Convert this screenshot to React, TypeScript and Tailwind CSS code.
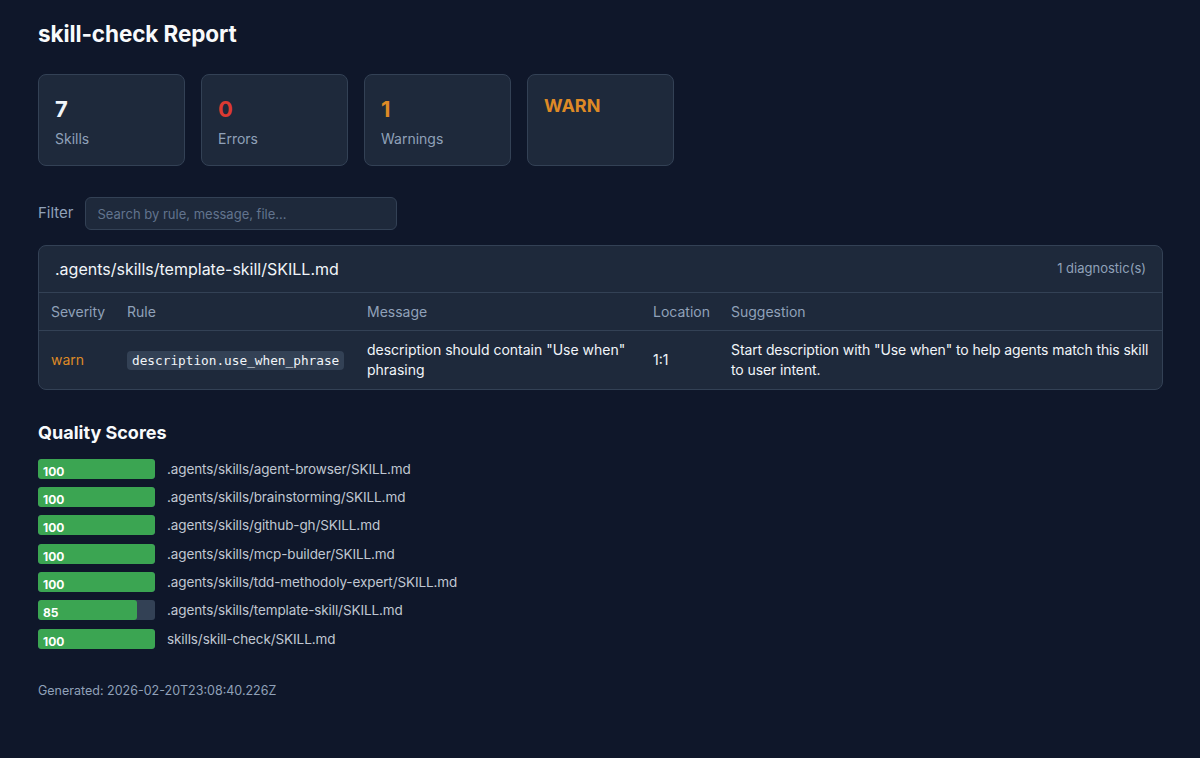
import React from 'react';

type Stat = { value: string; label: string; color: string };

const stats: Stat[] = [
  { value: '7', label: 'Skills', color: 'text-slate-100' },
  { value: '0', label: 'Errors', color: 'text-[#dc3a32]' },
  { value: '1', label: 'Warnings', color: 'text-[#de8a26]' },
];

const scores = [
  { score: 100, file: '.agents/skills/agent-browser/SKILL.md' },
  { score: 100, file: '.agents/skills/brainstorming/SKILL.md' },
  { score: 100, file: '.agents/skills/github-gh/SKILL.md' },
  { score: 100, file: '.agents/skills/mcp-builder/SKILL.md' },
  { score: 100, file: '.agents/skills/tdd-methodoly-expert/SKILL.md' },
  { score: 85, file: '.agents/skills/template-skill/SKILL.md' },
  { score: 100, file: 'skills/skill-check/SKILL.md' },
];

export default function App() {
  return (
    <div
      className="min-h-[758px] bg-[#0f172a] pl-[38px] pr-[37px] pt-[20px] pb-10 text-slate-200"
      style={{ fontFamily: 'Inter, "Noto Sans", sans-serif' }}
    >
      <h1 className="text-[22.5px] font-bold leading-[28px] text-slate-50 tracking-[-0.1px]">skill-check Report</h1>

      <div className="mt-[26px] flex gap-4">
        {stats.map((s) => (
          <div key={s.label} className="h-[92px] w-[147px] rounded-lg border border-[#334155] bg-[#1e293b] px-4 pt-[20px]">
            <div className={`text-[22px] font-bold leading-[28px] ${s.color}`}>{s.value}</div>
            <div className="mt-[7px] text-[14px] leading-[18px] text-slate-400">{s.label}</div>
          </div>
        ))}
        <div className="h-[92px] w-[147px] rounded-lg border border-[#334155] bg-[#1e293b] px-4 pt-[19px]">
          <div className="text-[18px] font-bold leading-[24px] text-[#de8a26]">WARN</div>
        </div>
      </div>

      <div className="mt-[31px] flex items-center gap-[11px]">
        <span className="text-[15px] text-slate-400">Filter</span>
        <input
          className="h-[33px] w-[312px] rounded-md border border-[#334155] bg-[#1e293b] px-3 text-[13px] text-slate-200 placeholder:text-slate-500 outline-none"
          placeholder="Search by rule, message, file..."
        />
      </div>

      <div className="mt-[15px] overflow-hidden rounded-lg border border-[#334155] bg-[#1e293b]">
        <div className="flex h-[47px] items-center justify-between border-b border-[#334155] px-4">
          <span className="text-[16px] text-slate-100">.agents/skills/template-skill/SKILL.md</span>
          <span className="text-[13px] text-slate-400">1 diagnostic(s)</span>
        </div>
        <table className="w-full border-collapse text-[14px]">
          <thead>
            <tr className="border-b border-[#334155] text-left text-slate-400">
              <th className="h-[37px] w-[76px] pl-3 font-normal">Severity</th>
              <th className="w-[240px] pl-3 font-normal">Rule</th>
              <th className="w-[286px] pl-3 font-normal">Message</th>
              <th className="w-[78px] pl-3 font-normal">Location</th>
              <th className="pl-3 font-normal">Suggestion</th>
            </tr>
          </thead>
          <tbody>
            <tr className="text-slate-100">
              <td className="pl-3 text-[#de8a26]">warn</td>
              <td className="pl-3">
                <span
                  className="rounded bg-[#334155] px-[5px] py-[2px] text-[12.75px] text-slate-100"
                  style={{ fontFamily: '"DejaVu Sans Mono", monospace' }}
                >
                  description.use_when_phrase
                </span>
              </td>
              <td className="py-[9px] pl-3 pr-2 leading-[20px]">description should contain "Use when" phrasing</td>
              <td className="pl-3">1:1</td>
              <td className="py-[9px] pl-3 pr-1 leading-[20px] tracking-[-0.1px]">
                Start description with "Use when" to help agents match this skill to user intent.
              </td>
            </tr>
          </tbody>
        </table>
      </div>

      <h2 className="mt-[31px] text-[18px] font-bold leading-[24px] text-slate-50">Quality Scores</h2>
      <div className="mt-[14px] flex flex-col gap-[8.4px]">
        {scores.map((s) => (
          <div key={s.file} className="flex h-[20px] items-center gap-3">
            <div className="relative h-[20px] w-[117px] overflow-hidden rounded-[3px] bg-[#334155]">
              <div className="h-full rounded-[3px] bg-[#3ba552]" style={{ width: `${s.score}%` }} />
              <span className="absolute bottom-[-2px] left-[5px] text-[12px] font-bold text-white">{s.score}</span>
            </div>
            <span className="text-[13.5px] leading-[20px] tracking-[-0.1px] text-[#c0c7d2]">{s.file}</span>
          </div>
        ))}
      </div>

      <div className="mt-[33px] text-[12.5px] text-slate-400">Generated: 2026-02-20T23:08:40.226Z</div>
    </div>
  );
}
